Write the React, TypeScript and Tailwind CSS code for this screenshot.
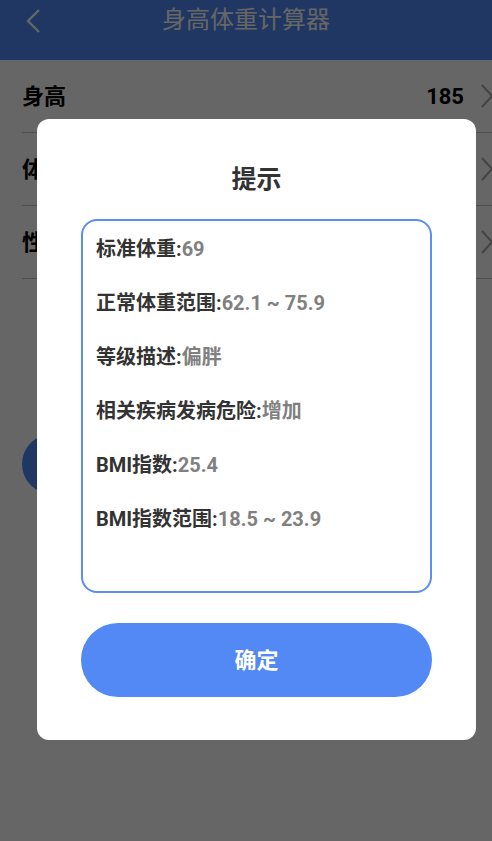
import React from 'react'

const rows = [
  { label: '身高', value: '185' },
  { label: '体重', value: '' },
  { label: '性别', value: '' },
]

const results = [
  { label: '标准体重:', value: '69' },
  { label: '正常体重范围:', value: '62.1 ~ 75.9' },
  { label: '等级描述:', value: '偏胖' },
  { label: '相关疾病发病危险:', value: '增加' },
  { label: 'BMI指数:', value: '25.4' },
  { label: 'BMI指数范围:', value: '18.5 ~ 23.9' },
]

function Chevron({ className }: { className?: string }) {
  return (
    <svg width="14" height="26" viewBox="0 0 14 26" fill="none" stroke="currentColor" strokeWidth="2" className={className}>
      <path d="M2 2l10 11L2 24" />
    </svg>
  )
}

export default function App() {
  return (
    <div
      className="relative w-[492px] h-[841px] overflow-hidden bg-white"
      style={{ fontFamily: 'Roboto, "Noto Sans CJK SC", sans-serif' }}
    >
      {/* Header */}
      <div className="h-[60px] bg-[#4e8af5]">
        <div className="relative h-[40px] flex items-center justify-center">
          <svg width="16" height="26" viewBox="0 0 16 26" fill="none" stroke="white" strokeWidth="2.4" className="absolute left-[25px] top-[8px]">
            <path d="M14 2L3 13l11 11" />
          </svg>
          <span className="text-white text-[24px]">身高体重计算器</span>
        </div>
      </div>

      {/* Form rows */}
      <div className="pl-[22px]">
        {rows.map((r) => (
          <div key={r.label} className="h-[73px] flex items-center border-b border-[#c4c4c4]">
            <span className="text-black text-[22px] font-bold">{r.label}</span>
            <div className="ml-auto flex items-center gap-[16px]">
              <span className="text-black text-[22px] font-bold">{r.value}</span>
              <Chevron className="text-[#aaaaaa] mr-[-2px]" />
            </div>
          </div>
        ))}
      </div>

      <div className="mt-[155px] mx-[22px] h-[60px] rounded-full bg-[#4e8af5]" />

      {/* Overlay + dialog */}
      <div className="absolute inset-0 bg-black/60">
        <div className="mt-[119px] ml-[37px] w-[439px] bg-white rounded-[12px] px-[44px] pt-[44px] pb-[43px]">
          <h2 className="text-center text-[25px] leading-[34px] font-bold text-[#333333]">提示</h2>
          <div className="mt-[22px] h-[374px] rounded-[16px] border-2 border-[#5a8ef2] pl-[13px] pt-[1px]">
            {results.map((r) => (
              <div key={r.label} className="h-[54px] flex items-center text-[20px] font-bold whitespace-nowrap">
                <span className="text-[#333333]">{r.label}</span>
                <span className="text-[#808080]">{r.value}</span>
              </div>
            ))}
          </div>
          <button className="mt-[30px] w-full h-[74px] rounded-full bg-[#5289f4] text-white text-[22px] font-bold">
            确定
          </button>
        </div>
      </div>
    </div>
  )
}
